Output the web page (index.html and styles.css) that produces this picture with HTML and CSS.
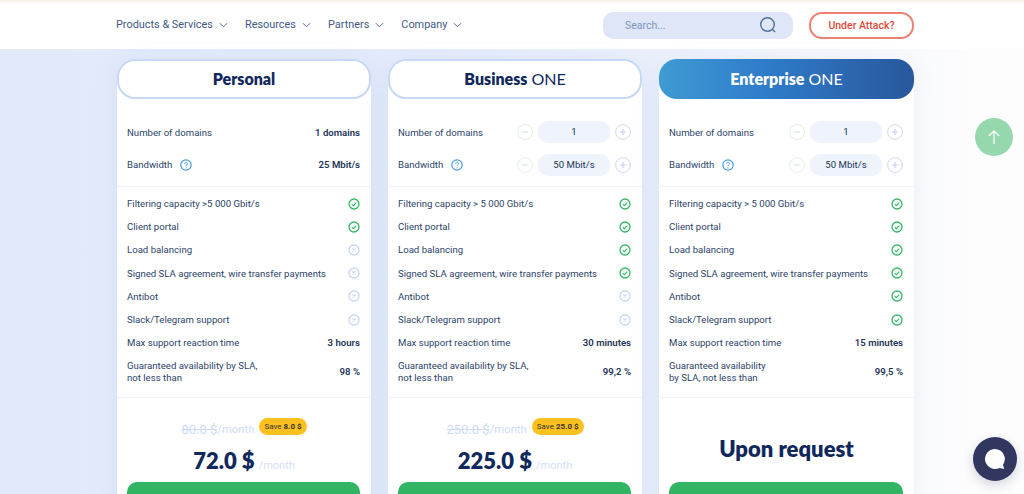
FILE: index.html
```html
<!DOCTYPE html>
<html lang="en">
<head>
<meta charset="UTF-8">
<meta name="viewport" content="width=device-width, initial-scale=1.0">
<title>Pricing plans</title>
<link rel="stylesheet" href="styles.css">
</head>
<body>
  <svg class="sprites" width="0" height="0" aria-hidden="true">
    <symbol id="chev" viewBox="0 0 10 6"><path d="M1 1l4 4 4-4" fill="none" stroke="#51688f" stroke-width="1.1"/></symbol>
    <symbol id="yes" viewBox="0 0 12 12"><circle cx="6" cy="6" r="5" fill="none" stroke="#35b765" stroke-width="1.3"/><path d="M3.8 6.2l1.6 1.5 2.9-3" fill="none" stroke="#35b765" stroke-width="1.1"/></symbol>
    <symbol id="no" viewBox="0 0 12 12"><circle cx="6" cy="6" r="5" fill="none" stroke="#c7d7f5" stroke-width="1.3"/><path d="M4.4 4.4l3.2 3.2M7.6 4.4l-3.2 3.2" fill="none" stroke="#c7d7f5" stroke-width="1.1"/></symbol>
    <symbol id="minus" viewBox="0 0 16 16"><circle cx="8" cy="8" r="7.4" fill="none" stroke="#e3eef0" stroke-width="1"/><path d="M5 8h6" stroke="#d5e0e4" stroke-width="1"/></symbol>
    <symbol id="plus" viewBox="0 0 16 16"><circle cx="8" cy="8" r="7.4" fill="none" stroke="#cbd9f5" stroke-width="1"/><path d="M5 8h6M8 5v6" stroke="#bccdf0" stroke-width="1"/></symbol>
    <symbol id="help" viewBox="0 0 12 12"><circle cx="6" cy="6" r="5.2" fill="none" stroke="#4a9ae0" stroke-width="1.2"/><path d="M4.5 4.8c0-2 3-2 3 0 0 1.1-1.5 1.1-1.5 2.3" fill="none" stroke="#4a9ae0" stroke-width="1"/><circle cx="6" cy="8.8" r=".6" fill="#4a9ae0"/></symbol>
  </svg>

  <header class="topbar">
    <nav class="nav">
      <a>Products &amp; Services <svg class="chev"><use href="#chev"/></svg></a>
      <a>Resources <svg class="chev"><use href="#chev"/></svg></a>
      <a>Partners <svg class="chev"><use href="#chev"/></svg></a>
      <a>Company <svg class="chev"><use href="#chev"/></svg></a>
    </nav>
    <div class="search">
      <span>Search...</span>
      <svg width="18" height="18" viewBox="0 0 18 18"><circle cx="8.5" cy="8.5" r="6.8" fill="none" stroke="#50709f" stroke-width="1.4"/><path d="M13.5 13.5l2.6 2.6" stroke="#50709f" stroke-width="1.4"/></svg>
    </div>
    <a class="attack">Under Attack?</a>
  </header>

  <main class="plans">
    <section class="plan">
      <h2 class="plan-title"><b>Personal</b></h2>
      <div class="group group-top">
        <div class="row"><span>Number of domains</span><strong>1 domains</strong></div>
        <div class="row"><span>Bandwidth <svg class="help"><use href="#help"/></svg></span><strong>25 Mbit/s</strong></div>
      </div>
      <div class="group group-list">
        <div class="row"><span>Filtering capacity &gt;5 000 Gbit/s</span><svg class="mark"><use href="#yes"/></svg></div>
        <div class="row"><span>Client portal</span><svg class="mark"><use href="#yes"/></svg></div>
        <div class="row"><span>Load balancing</span><svg class="mark"><use href="#no"/></svg></div>
        <div class="row"><span>Signed SLA agreement, wire transfer payments</span><svg class="mark"><use href="#no"/></svg></div>
        <div class="row"><span>Antibot</span><svg class="mark"><use href="#no"/></svg></div>
        <div class="row"><span>Slack/Telegram support</span><svg class="mark"><use href="#no"/></svg></div>
        <div class="row"><span>Max support reaction time</span><strong>3 hours</strong></div>
        <div class="row row-tall"><span>Guaranteed availability by SLA,<br>not less than</span><strong>98 %</strong></div>
      </div>
      <div class="price">
        <div class="old"><s>80.0 $</s>/month <em class="save">Save <b>8.0 $</b></em></div>
        <div class="now">72.0 $ <small>/month</small></div>
      </div>
      <a class="buy"></a>
    </section>

    <section class="plan">
      <h2 class="plan-title"><b>Business</b> ONE</h2>
      <div class="group group-top">
        <div class="row"><span>Number of domains</span><div class="stepper"><svg><use href="#minus"/></svg><output>1</output><svg><use href="#plus"/></svg></div></div>
        <div class="row"><span>Bandwidth <svg class="help"><use href="#help"/></svg></span><div class="stepper"><svg><use href="#minus"/></svg><output>50 Mbit/s</output><svg><use href="#plus"/></svg></div></div>
      </div>
      <div class="group group-list">
        <div class="row"><span>Filtering capacity &gt; 5 000 Gbit/s</span><svg class="mark"><use href="#yes"/></svg></div>
        <div class="row"><span>Client portal</span><svg class="mark"><use href="#yes"/></svg></div>
        <div class="row"><span>Load balancing</span><svg class="mark"><use href="#yes"/></svg></div>
        <div class="row"><span>Signed SLA agreement, wire transfer payments</span><svg class="mark"><use href="#yes"/></svg></div>
        <div class="row"><span>Antibot</span><svg class="mark"><use href="#no"/></svg></div>
        <div class="row"><span>Slack/Telegram support</span><svg class="mark"><use href="#no"/></svg></div>
        <div class="row"><span>Max support reaction time</span><strong>30 minutes</strong></div>
        <div class="row row-tall"><span>Guaranteed availability by SLA,<br>not less than</span><strong>99,2 %</strong></div>
      </div>
      <div class="price">
        <div class="old"><s>250.0 $</s>/month <em class="save">Save <b>25.0 $</b></em></div>
        <div class="now">225.0 $ <small>/month</small></div>
      </div>
      <a class="buy"></a>
    </section>

    <section class="plan plan-dark">
      <h2 class="plan-title"><b>Enterprise</b> ONE</h2>
      <div class="group group-top">
        <div class="row"><span>Number of domains</span><div class="stepper"><svg><use href="#minus"/></svg><output>1</output><svg><use href="#plus"/></svg></div></div>
        <div class="row"><span>Bandwidth <svg class="help"><use href="#help"/></svg></span><div class="stepper"><svg><use href="#minus"/></svg><output>50 Mbit/s</output><svg><use href="#plus"/></svg></div></div>
      </div>
      <div class="group group-list">
        <div class="row"><span>Filtering capacity &gt; 5 000 Gbit/s</span><svg class="mark"><use href="#yes"/></svg></div>
        <div class="row"><span>Client portal</span><svg class="mark"><use href="#yes"/></svg></div>
        <div class="row"><span>Load balancing</span><svg class="mark"><use href="#yes"/></svg></div>
        <div class="row"><span>Signed SLA agreement, wire transfer payments</span><svg class="mark"><use href="#yes"/></svg></div>
        <div class="row"><span>Antibot</span><svg class="mark"><use href="#yes"/></svg></div>
        <div class="row"><span>Slack/Telegram support</span><svg class="mark"><use href="#yes"/></svg></div>
        <div class="row"><span>Max support reaction time</span><strong>15 minutes</strong></div>
        <div class="row row-tall"><span>Guaranteed availability<br>by SLA, not less than</span><strong>99,5 %</strong></div>
      </div>
      <div class="price price-request">Upon request</div>
      <a class="buy"></a>
    </section>
  </main>

  <a class="to-top">
    <svg width="16" height="16" viewBox="0 0 16 16"><path d="M8 15V2M2.8 7L8 1.8 13.2 7" fill="none" stroke="#fff" stroke-width="1.2"/></svg>
  </a>
  <a class="chat">
    <svg width="22" height="22" viewBox="0 0 22 22"><path d="M11 1a10 10 0 1 0 4.6 18.9l4.6 1-1.2-4.2A10 10 0 0 0 11 1z" fill="#fff"/></svg>
  </a>
</body>
</html>
```

FILE: styles.css
```css
/* Basic styling */
html, body {
  height: 494px;
  overflow: hidden;
}
body {
  margin: 0;
  font-family: Roboto, "Liberation Sans", sans-serif;
  font-size: 9.6px;
  color: #2c4468;
  background: linear-gradient(90deg, #e2eafa 0%, #e4ebfa 37%, #ebf0fb 64%, #fdfdfe 95%);
}
.sprites {
  position: absolute;
}

/* Top bar */
.topbar {
  display: flex;
  align-items: center;
  height: 47px;
  padding: 0 110px 0 116px;
  background: #fff;
  border-top: 2px solid #f6f2ee;
}
.nav {
  display: flex;
  gap: 17px;
  flex: 1;
  margin-top: -2px;
  font-size: 10.9px;
  color: #3f5a85;
}
.nav a {
  display: flex;
  align-items: center;
  gap: 5px;
}
.chev {
  width: 9px;
  height: 6px;
  margin-left: 1px;
}
.search {
  display: flex;
  align-items: center;
  justify-content: space-between;
  box-sizing: border-box;
  width: 190px;
  height: 27px;
  margin-top: -1px;
  padding: 0 16px 0 22px;
  border-radius: 10px;
  background: #dee6f7;
  color: #7d92bd;
  font-size: 10.5px;
}
.attack {
  display: flex;
  align-items: center;
  justify-content: center;
  box-sizing: border-box;
  width: 105px;
  height: 27px;
  margin: -1px 0 0 16px;
  border: 2px solid #ef7f71;
  border-radius: 13px;
  color: #e2483a;
  font-size: 10.5px;
  font-weight: 500;
}

/* Plans */
.plans {
  display: grid;
  grid-template-columns: 254px 254px 255px;
  gap: 17px;
  padding: 10px 0 0 117px;
}
.plan {
  background: #fff;
  border-radius: 18px 18px 0 0;
  box-shadow: 0 4px 24px rgba(120, 150, 210, 0.12);
}
.plan-title {
  display: flex;
  align-items: center;
  justify-content: center;
  gap: 4px;
  box-sizing: border-box;
  height: 40px;
  margin: 0;
  padding-bottom: 2px;
  border: 2px solid #c6d8f6;
  border-radius: 18px;
  background: #fff;
  font-family: Lato, sans-serif;
  font-size: 16px;
  font-weight: 400;
  color: #10285c;
}
.plan-title b {
  font-weight: 800;
}
.plan-dark .plan-title {
  border: none;
  background: linear-gradient(90deg, #3f9bd2 0%, #2f7dcb 40%, #28579c 100%);
  color: #fff;
}
.group {
  padding: 0 11px 0 10px;
  border-bottom: 1px solid #eef2fb;
}
.group-top {
  height: 88px;
  padding-top: 17px;
  box-sizing: border-box;
}
.group-top .row {
  height: 32.5px;
}
.group-list {
  height: 211px;
  padding-top: 5px;
  box-sizing: border-box;
}
.row {
  display: flex;
  align-items: center;
  justify-content: space-between;
  height: 23.2px;
}
.row-tall {
  height: 26px;
  line-height: 12px;
  margin-top: 5px;
}
.row strong {
  font-weight: 600;
  color: #1c3358;
}
.row > span {
  display: block;
}
.help {
  width: 12px;
  height: 12px;
  margin-left: 5px;
  vertical-align: -3px;
}
.mark {
  width: 12px;
  height: 12px;
}
.stepper {
  display: flex;
  align-items: center;
  gap: 5px;
}
.stepper svg {
  width: 16px;
  height: 16px;
}
.stepper output {
  width: 72px;
  height: 22px;
  line-height: 22px;
  border-radius: 10px;
  background: #eff3fc;
  text-align: center;
  color: #1c3358;
}

/* Price block */
.price {
  height: 84px;
  box-sizing: border-box;
  padding-top: 19px;
  text-align: center;
}
.old {
  display: flex;
  align-items: center;
  justify-content: center;
  height: 24px;
  font-size: 11.3px;
  color: #cddbf6;
}
.old s {
  font-size: 13px;
}
.save {
  margin: -6px 0 0 5px;
  padding: 4px 5px;
  border-radius: 9px;
  background: #fcc11f;
  color: #333;
  font-size: 8px;
  font-style: normal;
}
.now {
  margin-top: 6px;
  font-family: Lato, sans-serif;
  font-size: 22px;
  font-weight: 800;
  color: #10285c;
}
.now small {
  margin-left: -1px;
  font-family: Roboto, sans-serif;
  font-size: 11px;
  font-weight: 400;
  color: #d3e0f8;
}
.price-request {
  padding-top: 37px;
  font-family: Lato, sans-serif;
  font-size: 22px;
  font-weight: 800;
  color: #10285c;
}
.buy {
  display: block;
  height: 40px;
  margin: 0 11px 0 10px;
  border-radius: 10px;
  background: #31b563;
}

/* Floating buttons */
.to-top {
  position: fixed;
  left: 975px;
  top: 118px;
  display: flex;
  align-items: center;
  justify-content: center;
  width: 38px;
  height: 38px;
  border-radius: 50%;
  background: #95d8ae;
}
.chat {
  position: fixed;
  left: 973px;
  top: 437px;
  display: flex;
  align-items: center;
  justify-content: center;
  width: 44px;
  height: 44px;
  border-radius: 50%;
  background: #31375f;
  box-shadow: 0 4px 12px rgba(40, 50, 90, 0.2);
}
```
